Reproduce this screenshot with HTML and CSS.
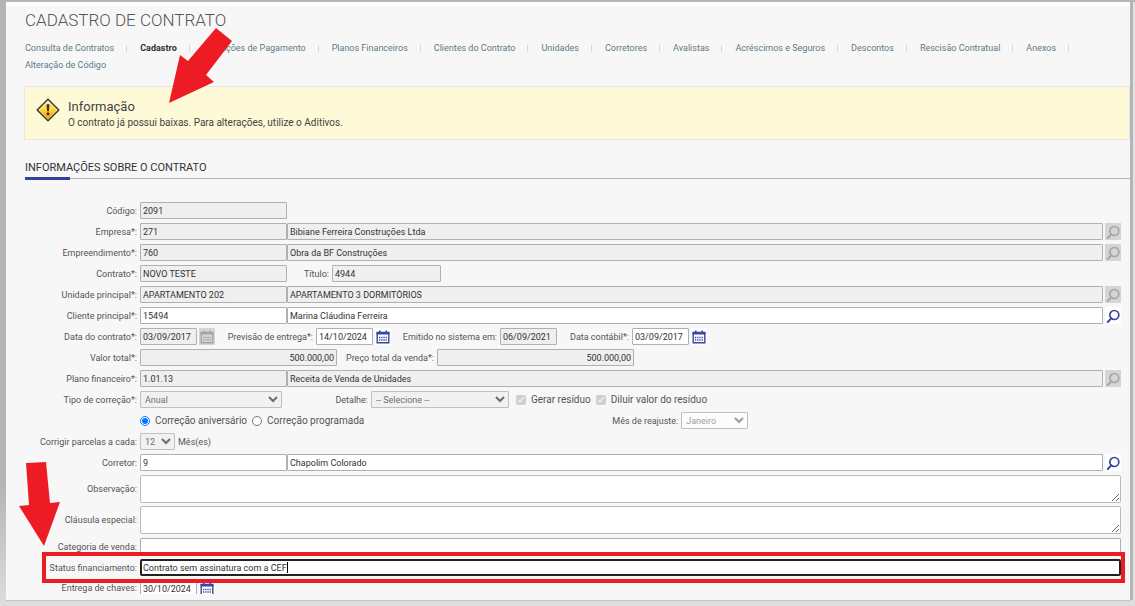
FILE: index.html
```
<!DOCTYPE html>
<html lang="pt-br">

<head>
    <meta charset="UTF-8">
    <title>Cadastro de Contrato</title>
    <link rel="stylesheet" href="styles.css">
</head>

<body>
    <!-- shared icons -->
    <svg class="sprite" aria-hidden="true">
        <symbol id="icon-search" viewBox="0 0 16 16">
            <circle cx="9.3" cy="7" r="4.5" fill="none" stroke="currentColor" stroke-width="1.7" />
            <path d="M6.2 10.4 2.8 14" fill="none" stroke="currentColor" stroke-width="2" stroke-linecap="round" />
        </symbol>
        <symbol id="icon-calendar" viewBox="0 0 16 16">
            <path d="M2.2 3.5h11.6v10.3H2.2z" fill="none" stroke="currentColor" stroke-width="1.4" />
            <path d="M1.6 3h12.8v2.4H1.6zM4 1.5h1.6v2H4zM10.4 1.5H12v2h-1.6z" fill="currentColor" />
            <path d="M4 8.5h8M4 11h8" fill="none" stroke="currentColor" stroke-width="1.5" stroke-dasharray="1.3 .9" />
        </symbol>
    </svg>

    <div class="page">
        <header>
            <h1>CADASTRO DE CONTRATO</h1>
            <nav>
                <a href="#">Consulta de Contratos</a>
                <a href="#" class="active">Cadastro</a>
                <a href="#">Condições de Pagamento</a>
                <a href="#">Planos Financeiros</a>
                <a href="#">Clientes do Contrato</a>
                <a href="#">Unidades</a>
                <a href="#">Corretores</a>
                <a href="#">Avalistas</a>
                <a href="#">Acréscimos e Seguros</a>
                <a href="#">Descontos</a>
                <a href="#">Rescisão Contratual</a>
                <a href="#">Anexos</a>
                <a href="#">Alteração de Código</a>
            </nav>
            <svg class="arrow arrow-top" viewBox="0 0 64 76" aria-hidden="true">
                <path d="M47 0 63 13 37 47 45 54 0 75 11 27 19 33z" fill="#ed1c24" />
            </svg>
        </header>

        <div class="notice">
            <svg class="notice-icon" viewBox="0 0 24 24" aria-hidden="true">
                <defs>
                    <linearGradient id="warn" x1="0" y1="0" x2="0" y2="1">
                        <stop offset="0" stop-color="#fff3a0" />
                        <stop offset=".5" stop-color="#fcd535" />
                        <stop offset="1" stop-color="#f39a00" />
                    </linearGradient>
                </defs>
                <path d="M12 1.2 22.8 12 12 22.8 1.2 12z" fill="#fff" stroke="#333" stroke-width="1.5" stroke-linejoin="round" />
                <path d="M12 2.6 21.4 12 12 21.4 2.6 12z" fill="url(#warn)" />
                <path d="M10.5 6.3h3l-.6 7h-1.8z" fill="#333" />
                <circle cx="12" cy="15.7" r="1.5" fill="#333" />
            </svg>
            <div>
                <h2>Informação</h2>
                <p>O contrato já possui baixas. Para alterações, utilize o Aditivos.</p>
            </div>
        </div>

        <h2 class="section-title">INFORMAÇÕES SOBRE O CONTRATO</h2>

        <form>
            <svg class="arrow arrow-bottom" viewBox="0 0 42 84" aria-hidden="true">
                <path d="M7 1 27 0 31 41 41 40 25 84 0 44 10 43z" fill="#ed1c24" />
            </svg>
            <div class="row">
                <label for="codigo">Código:</label>
                <input type="text" id="codigo" class="code" value="2091" readonly>
            </div>
            <div class="row">
                <label for="empresa">Empresa*:</label>
                <input type="text" id="empresa" class="code" value="271" readonly>
                <input type="text" class="name" aria-label="Nome da empresa" value="Bibiane Ferreira Construções Ltda" readonly>
                <button type="button" aria-label="Buscar empresa" disabled><svg><use href="#icon-search" /></svg></button>
            </div>
            <div class="row">
                <label for="empreendimento">Empreendimento*:</label>
                <input type="text" id="empreendimento" class="code" value="760" readonly>
                <input type="text" class="name" aria-label="Nome do empreendimento" value="Obra da BF Construções" readonly>
                <button type="button" aria-label="Buscar empreendimento" disabled><svg><use href="#icon-search" /></svg></button>
            </div>
            <div class="row">
                <label for="contrato">Contrato*:</label>
                <input type="text" id="contrato" class="code" value="NOVO TESTE" readonly>
                <label for="titulo" class="label-title">Título:</label>
                <input type="text" id="titulo" class="title-input" value="4944" readonly>
            </div>
            <div class="row">
                <label for="unidade">Unidade principal*:</label>
                <input type="text" id="unidade" class="code" value="APARTAMENTO 202" readonly>
                <input type="text" class="name" aria-label="Descrição da unidade" value="APARTAMENTO 3 DORMITÓRIOS" readonly>
                <button type="button" aria-label="Buscar unidade" disabled><svg><use href="#icon-search" /></svg></button>
            </div>
            <div class="row">
                <label for="cliente">Cliente principal*:</label>
                <input type="text" id="cliente" class="code" value="15494">
                <input type="text" class="name" aria-label="Nome do cliente" value="Marina Cláudina Ferreira">
                <button type="button" aria-label="Buscar cliente"><svg><use href="#icon-search" /></svg></button>
            </div>
            <div class="row">
                <label for="data-contrato">Data do contrato*:</label>
                <input type="text" id="data-contrato" class="date" value="03/09/2017" readonly>
                <button type="button" aria-label="Calendário" disabled><svg><use href="#icon-calendar" /></svg></button>
                <label for="previsao" class="label-delivery">Previsão de entrega*:</label>
                <input type="text" id="previsao" class="date" value="14/10/2024">
                <button type="button" aria-label="Calendário"><svg><use href="#icon-calendar" /></svg></button>
                <label for="emitido" class="label-issued">Emitido no sistema em:</label>
                <input type="text" id="emitido" class="date" value="06/09/2021" readonly>
                <label for="contabil" class="label-accounting">Data contábil*:</label>
                <input type="text" id="contabil" class="date" value="03/09/2017">
                <button type="button" aria-label="Calendário"><svg><use href="#icon-calendar" /></svg></button>
            </div>
            <div class="row">
                <label for="valor">Valor total*:</label>
                <input type="text" id="valor" class="money" value="500.000,00" readonly>
                <label for="preco" class="label-price">Preço total da venda*:</label>
                <input type="text" id="preco" class="money" value="500.000,00" readonly>
            </div>
            <div class="row">
                <label for="plano">Plano financeiro*:</label>
                <input type="text" id="plano" class="code" value="1.01.13" readonly>
                <input type="text" class="name" aria-label="Nome do plano" value="Receita de Venda de Unidades" readonly>
                <button type="button" aria-label="Buscar plano" disabled><svg><use href="#icon-search" /></svg></button>
            </div>
            <div class="row">
                <label for="tipo">Tipo de correção*:</label>
                <select id="tipo" class="select-type" disabled>
                    <option>Anual</option>
                </select>
                <label for="detalhe" class="label-detail">Detalhe:</label>
                <select id="detalhe" class="select-detail" disabled>
                    <option>-- Selecione --</option>
                </select>
                <input type="checkbox" id="gerar" class="first-check" checked disabled>
                <label for="gerar" class="choice">Gerar resíduo</label>
                <input type="checkbox" id="diluir" checked disabled>
                <label for="diluir" class="choice">Diluir valor do resíduo</label>
            </div>
            <div class="row">
                <span class="spacer"></span>
                <input type="radio" name="correcao" id="aniversario" checked>
                <label for="aniversario" class="choice">Correção aniversário</label>
                <input type="radio" name="correcao" id="programada">
                <label for="programada" class="choice">Correção programada</label>
                <label for="mes" class="label-month">Mês de reajuste:</label>
                <select id="mes" class="select-month" disabled>
                    <option>Janeiro</option>
                </select>
            </div>
            <div class="row">
                <label for="parcelas">Corrigir parcelas a cada:</label>
                <select id="parcelas" class="select-months" disabled>
                    <option>12</option>
                </select>
                <span class="unit">Mês(es)</span>
            </div>
            <div class="row">
                <label for="corretor">Corretor:</label>
                <input type="text" id="corretor" class="code" value="9">
                <input type="text" class="name" aria-label="Nome do corretor" value="Chapolim Colorado">
                <button type="button" aria-label="Buscar corretor"><svg><use href="#icon-search" /></svg></button>
            </div>
            <div class="row tall">
                <label for="observacao">Observação:</label>
                <textarea id="observacao"></textarea>
            </div>
            <div class="row tall">
                <label for="clausula">Cláusula especial:</label>
                <textarea id="clausula"></textarea>
            </div>
            <div class="row">
                <label for="categoria">Categoria de venda:</label>
                <input type="text" id="categoria" class="full">
            </div>
            <div class="row status">
                <label for="status">Status financiamento:</label>
                <div class="focus-field">
                    <input type="text" id="status" value="Contrato sem assinatura com a CEF">
                    <span class="caret"></span>
                </div>
            </div>
            <div class="row cut">
                <label for="chaves">Entrega de chaves:</label>
                <input type="text" id="chaves" class="date" value="30/10/2024">
                <button type="button" aria-label="Calendário"><svg><use href="#icon-calendar" /></svg></button>
            </div>
        </form>
    </div>
</body>

</html>
```
FILE: styles.css
```
* {
    box-sizing: border-box;
}

body {
    margin: 0;
    min-height: 100vh;
    padding: 2px 5px 6px 6px;
    font-family: Roboto, Arial, sans-serif;
    font-size: 9px;
    color: #555;
    background: linear-gradient(#b4b5b5 0, #b4b5b5 80%, #dcdddd 100%);
}

.sprite {
    display: none;
}

.page {
    position: relative;
    padding: 4px 0 6px 19px;
    background: #f7f7f7;
    border-top: 4px solid #fff;
    box-shadow: 3px 0 #b5b5b5, 6px 0 #e4e4e4, 0 1px #c4c4c4, 0 8px #dcdddd;
}

header {
    position: relative;
}

h1 {
    margin: 0 0 10px;
    font-size: 17px;
    line-height: 20px;
    font-weight: 300;
    color: #555;
}

nav {
    display: flex;
    flex-wrap: wrap;
    line-height: 17px;
}

nav a {
    position: relative;
    margin-right: 26px;
    color: #5e7a88;
    text-decoration: none;
}

nav a::after {
    content: "";
    position: absolute;
    top: 5px;
    right: -13px;
    width: 1px;
    height: 7px;
    background: #d3d8db;
}

nav a:last-child::after {
    display: none;
}

nav .active {
    color: #333;
    font-weight: bold;
}

.arrow {
    position: absolute;
    z-index: 2;
}

.arrow-top {
    top: 18px;
    left: 144px;
    width: 64px;
    height: 76px;
}

.arrow-bottom {
    top: 260px;
    left: -6px;
    width: 42px;
    height: 84px;
}

.notice {
    display: flex;
    gap: 8px;
    height: 54px;
    margin: 12px 0 0 -1px;
    padding: 11px;
    background: #fef9d7;
    border: 1px solid #e4e6ea;
}

.notice-icon {
    width: 24px;
    height: 24px;
}

.notice h2 {
    margin: 0;
    font-size: 13px;
    line-height: 17px;
    font-weight: normal;
    color: #444;
}

.notice p {
    margin: 0;
    font-size: 10px;
    line-height: 16px;
    color: #444;
}

.section-title {
    position: relative;
    margin: 18px 0 23px;
    padding-bottom: 1px;
    border-bottom: 1px solid #b3b3b3;
    font-size: 11px;
    line-height: 19px;
    font-weight: normal;
    color: #333;
}

.section-title::after {
    content: "";
    position: absolute;
    bottom: -2px;
    left: 0;
    width: 45px;
    height: 3px;
    background: #34409a;
}

form {
    position: relative;
    display: flex;
    flex-direction: column;
    gap: 4px;
    padding-right: 9px;
}

.row {
    display: flex;
    align-items: center;
    height: 17px;
}

.row > label,
.spacer {
    flex: none;
    width: 112px;
    margin-right: 3px;
    text-align: right;
    white-space: nowrap;
}

input,
select,
textarea {
    margin: 0;
    font-family: inherit;
    font-size: 9px;
    color: #333;
}

input[type="text"] {
    min-width: 0;
    height: 17px;
    padding: 0 2px;
    border: 1px solid #b0b0b0;
    border-radius: 1px;
    background: #fff;
}

input[type="text"]:read-only {
    background: #efefef;
}

.code {
    width: 147px;
}

.name,
.full {
    flex: 1;
}

.date {
    width: 57px;
}

.money {
    width: 197px;
    text-align: right;
}

.title-input {
    width: 109px;
}

button {
    flex: none;
    width: 16px;
    height: 17px;
    margin-left: 2px;
    padding: 0;
    border: 0;
    background: #fff;
    color: #3a45a0;
}

button:disabled {
    background: #d5d5d5;
    color: #a5a5a5;
}

button svg {
    display: block;
    width: 16px;
    height: 16px;
}

select {
    height: 17px;
    border: 1px solid #aaa;
    border-radius: 1px;
    background: #efefef;
}

.select-type {
    width: 142px;
}

.select-detail {
    width: 138px;
}

.select-month {
    width: 67px;
    background: #fff;
    color: #777;
}

.select-months {
    width: 35px;
}

.unit {
    margin-left: 3px;
}

.row .label-title {
    width: 42px;
}

.row .label-delivery {
    width: 98px;
}

.row .label-issued {
    width: 106px;
}

.row .label-accounting {
    width: 72px;
}

.row .label-price {
    width: 97px;
}

.row .label-detail {
    width: 86px;
}

.row .label-month {
    width: 309px;
}

input[type="checkbox"],
input[type="radio"] {
    flex: none;
    width: 10px;
    height: 10px;
}

.first-check {
    margin-left: 7px;
}

.row .choice {
    width: auto;
    margin: 0 5px;
    font-size: 10px;
}

.tall {
    height: 28px;
}

textarea {
    flex: 1;
    height: 28px;
    border: 1px solid #bbb;
    border-radius: 2px;
    background: #fff;
}

.tall + .tall {
    margin-top: -1px;
}

/* row marked in red */
.status {
    position: relative;
}

.status::after {
    content: "";
    position: absolute;
    top: -7px;
    right: -4px;
    bottom: -7px;
    left: 17px;
    border: 4px solid #ed1c24;
    pointer-events: none;
}

.focus-field {
    display: flex;
    flex: 1;
    align-items: center;
    height: 17px;
    padding: 0 1px;
    border: 2px solid #222;
    border-radius: 2px;
    background: #fff;
}

.focus-field input[type="text"] {
    height: 13px;
    padding: 0;
    border: 0;
    field-sizing: content;
}

.caret {
    width: 1px;
    height: 11px;
    background: #000;
}

.cut {
    align-items: flex-start;
    height: 14px;
    line-height: 17px;
    overflow: hidden;
}
```
